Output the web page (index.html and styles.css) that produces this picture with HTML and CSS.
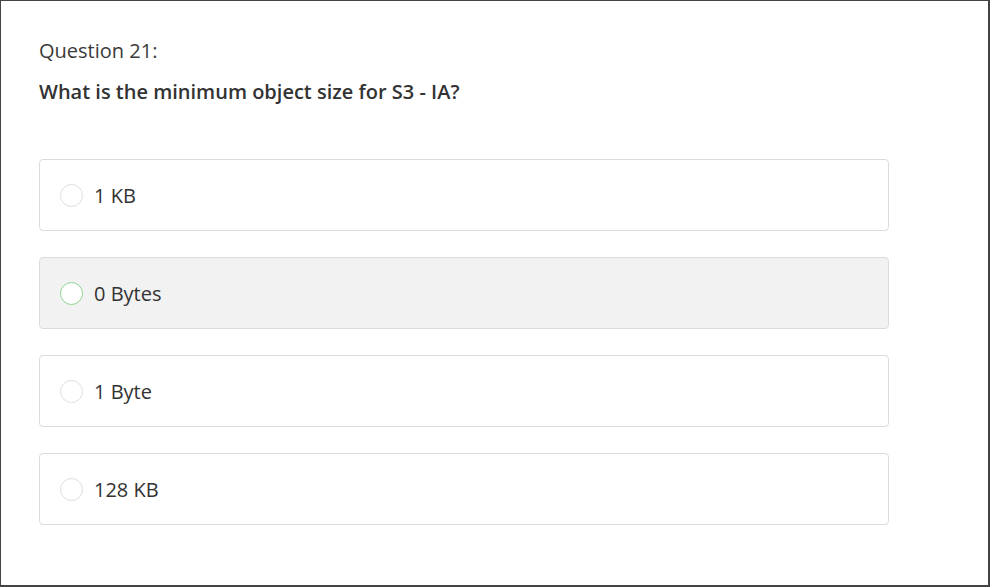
FILE: index.html
```html
<!DOCTYPE html>
<html>
<head>
<meta charset="utf-8">
<link rel="stylesheet" href="styles.css">
</head>
<body>
<div class="frame">
  <div class="label">Question 21:</div>
  <div class="prompt">What is the minimum object size for S3 - IA?</div>
  <div class="options">
    <div class="option"><span class="radio"></span><span class="text">1 KB</span></div>
    <div class="option hover"><span class="radio"></span><span class="text">0 Bytes</span></div>
    <div class="option"><span class="radio"></span><span class="text">1 Byte</span></div>
    <div class="option"><span class="radio"></span><span class="text">128 KB</span></div>
  </div>
</div>
</body>
</html>
```
FILE: styles.css
```css
html, body { margin: 0; padding: 0; background: #fff; }
body { width: 990px; height: 587px; overflow: hidden; }
.frame {
  box-sizing: border-box;
  width: 990px;
  height: 587px;
  border: 1px solid #444;
  border-right-width: 2px;
  border-bottom-width: 2px;
  padding: 37px 0 0 38px;
  font-family: "Open Sans", sans-serif;
  color: #333;
}
.label { font-size: 20px; line-height: 26px; font-weight: 400; color: #3a3a3a; }
.prompt { margin-top: 15px; font-size: 20px; line-height: 26px; font-weight: 600; color: #333; }
.options { margin-top: 54px; display: flex; flex-direction: column; gap: 26px; width: 850px; }
.option {
  box-sizing: border-box;
  height: 72px;
  border: 1px solid #dcdcdc;
  border-radius: 4px;
  display: flex;
  align-items: center;
  padding-left: 20px;
  background: #fff;
}
.option.hover { background: #f2f2f2; }
.radio {
  box-sizing: border-box;
  width: 23px; height: 23px;
  border: 1px solid #dedede;
  border-radius: 50%;
  background: #fff;
  flex: none;
}
.option.hover .radio { border-color: #8fd18f; }
.text { margin-left: 11px; font-size: 20px; color: #333; }
```
